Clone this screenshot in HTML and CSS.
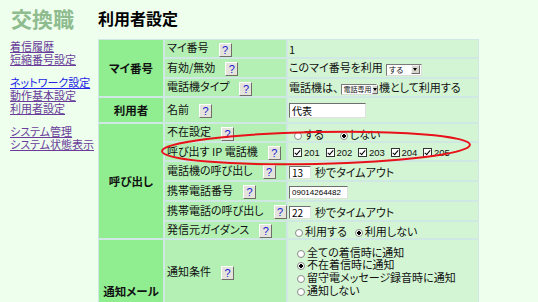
FILE: index.html
```html
<!DOCTYPE html>
<html lang="ja">
<head>
<meta charset="utf-8">
<title>利用者設定</title>
<link rel="stylesheet" href="styles.css">
</head>
<body>
<div class="page">
  <div class="logo">交換職</div>
  <h1 class="title">利用者設定</h1>
  <nav class="nav">
    <div class="nav-group">
      <a href="#" class="visited">着信履歴</a>
      <a href="#" class="visited">短縮番号設定</a>
    </div>
    <div class="nav-group">
      <a href="#" class="fresh">ネットワーク設定</a>
      <a href="#" class="visited">動作基本設定</a>
      <a href="#" class="visited">利用者設定</a>
    </div>
    <div class="nav-group">
      <a href="#" class="visited">システム管理</a>
      <a href="#" class="visited">システム状態表示</a>
    </div>
  </nav>
  <main class="content">
    <table class="settings">
      <colgroup>
        <col class="c-cat">
        <col class="c-label">
        <col class="c-value">
      </colgroup>
      <tbody>
        <tr class="h19">
          <td class="cat" rowspan="3">マイ番号</td>
          <td class="label">マイ番号<button class="help" type="button">?</button></td>
          <td class="value">1</td>
        </tr>
        <tr class="h20">
          <td class="label">有効/無効<button class="help" type="button">?</button></td>
          <td class="value">このマイ番号を利用<span class="select sel-use"><span class="sel-val">する</span><span class="sel-btn"></span></span></td>
        </tr>
        <tr class="h19">
          <td class="label">電話機タイプ<button class="help" type="button">?</button></td>
          <td class="value">電話機は、<span class="select sel-type"><span class="sel-val">電話専用</span><span class="sel-btn"></span></span> 機として利用する</td>
        </tr>
        <tr class="h26">
          <td class="cat">利用者</td>
          <td class="label">名前<button class="help" type="button">?</button></td>
          <td class="value"><input class="text w-name" type="text" value="代表"></td>
        </tr>
        <tr class="h19">
          <td class="cat" rowspan="6">呼び出し</td>
          <td class="label">不在設定<button class="help" type="button">?</button></td>
          <td class="value"><label class="opt opt-a"><input class="rb" type="radio" name="absent">する</label><label class="opt"><input class="rb" type="radio" name="absent" checked>しない</label></td>
        </tr>
        <tr class="h19">
          <td class="label">呼び出す IP 電話機<button class="help" type="button">?</button></td>
          <td class="value"><span class="cbs"><label class="cb-item"><input class="cb" type="checkbox" checked>201</label><label class="cb-item"><input class="cb" type="checkbox" checked>202</label><label class="cb-item"><input class="cb" type="checkbox" checked>203</label><label class="cb-item"><input class="cb" type="checkbox" checked>204</label><label class="cb-item"><input class="cb" type="checkbox" checked>205</label></span></td>
        </tr>
        <tr class="h20">
          <td class="label">電話機の呼び出し<button class="help" type="button">?</button></td>
          <td class="value"><input class="text w-sec" type="text" value="13"><span class="after">秒でタイムアウト</span></td>
        </tr>
        <tr class="h20">
          <td class="label">携帯電話番号<button class="help" type="button">?</button></td>
          <td class="value"><input class="text w-tel" type="text" value="09014264482"></td>
        </tr>
        <tr class="h20">
          <td class="label">携帯電話の呼び出し<button class="help" type="button">?</button></td>
          <td class="value"><input class="text w-sec" type="text" value="22"><span class="after">秒でタイムアウト</span></td>
        </tr>
        <tr class="h18">
          <td class="label">発信元ガイダンス<button class="help" type="button">?</button></td>
          <td class="value"><label class="opt opt-b"><input class="rb" type="radio" name="guide">利用する</label><label class="opt"><input class="rb" type="radio" name="guide" checked>利用しない</label></td>
        </tr>
        <tr class="h64">
          <td class="cat cat-mail" rowspan="3">通知メール</td>
          <td class="label label-top">通知条件<button class="help" type="button">?</button></td>
          <td class="value list">
            <label class="line"><input class="rb" type="radio" name="notify">全ての着信時に通知</label>
            <label class="line"><input class="rb" type="radio" name="notify" checked>不在着信時に通知</label>
            <label class="line"><input class="rb" type="radio" name="notify">留守電メッセージ録音時に通知</label>
            <label class="line"><input class="rb" type="radio" name="notify">通知しない</label>
          </td>
        </tr>
        <tr class="h20">
          <td class="label"></td>
          <td class="value"></td>
        </tr>
        <tr class="h20">
          <td class="label"></td>
          <td class="value"></td>
        </tr>
      </tbody>
    </table>
  </main>
</div>
<svg class="annot" width="538" height="302" viewBox="0 0 538 302" aria-hidden="true">
  <ellipse cx="316" cy="148" rx="154" ry="16" transform="rotate(-1.2 316 148)" fill="none" stroke="#e8121a" stroke-width="2"/>
</svg>
</body>
</html>
```

FILE: styles.css
```css
* { box-sizing: border-box; }

body {
  margin: 0;
  background: #eeffee;
  font-family: "Noto Sans CJK JP", "Noto Sans", sans-serif;
  font-size: 11px;
  color: #111;
  font-feature-settings: "palt" 1;
}

.page {
  display: grid;
  grid-template-columns: 98px auto;
  grid-template-rows: 39px auto;
}

.logo {
  padding: 6px 0 0 11px;
  font-size: 21px;
  line-height: 24px;
  font-weight: bold;
  color: #8fbc8f;
}

.title {
  margin: 0;
  padding-top: 10px;
  font-size: 16px;
  line-height: 16px;
  font-weight: bold;
  color: #000;
}

.nav {
  padding: 1px 0 0 10px;
}

.nav-group {
  margin-bottom: 10px;
}

.nav a {
  display: block;
  line-height: 13px;
  font-size: 11px;
}

.nav a.visited { color: #6a3d9a; }
.nav a.fresh { color: #2323e6; }

.settings {
  border-collapse: separate;
  border-spacing: 0;
  table-layout: fixed;
  width: 381px;
}

.c-cat { width: 66px; }
.c-label { width: 123px; }
.c-value { width: 192px; }

.settings td {
  border: 1px solid #cfe8e4;
  padding: 0 1px;
  white-space: nowrap;
  vertical-align: middle;
  line-height: 14px;
}

.h18 { height: 18px; }
.h19 { height: 19px; }
.h20 { height: 20px; }
.h26 { height: 26px; }
.h64 { height: 64px; }

.cat {
  background: #90ee90;
  font-weight: bold;
  text-align: center;
  font-size: 11.5px;
}

.settings td.cat-mail {
  vertical-align: top;
  padding-top: 44px;
}

.label {
  background: #b4f0b4;
}

.settings td.label { padding-left: 2px; }

.settings td.label-top {
  vertical-align: top;
  padding-top: 24px;
}

.value {
  background: #d4f5d4;
}

.help {
  display: inline-block;
  width: 13px;
  height: 14px;
  margin-left: 10px;
  padding: 0;
  font-family: "Liberation Sans", sans-serif;
  font-size: 11px;
  line-height: 12px;
  color: #1a1ad0;
  background: #e4e4dc;
  border: 1px solid;
  border-color: #ffffff #6f6f68 #6f6f68 #ffffff;
  vertical-align: middle;
}

.select {
  display: inline-flex;
  align-items: center;
  justify-content: space-between;
  vertical-align: middle;
  background: #fff;
  border: 1px solid;
  border-color: #7a7a7a #dcdcdc #dcdcdc #7a7a7a;
  padding: 0 1px 0 2px;
}

.sel-use {
  width: 36px;
  height: 12px;
  margin-left: 3px;
  font-size: 8px;
}

.sel-type {
  width: 36px;
  height: 11px;
  margin-left: 2px;
  font-size: 7px;
}

.sel-val {
  line-height: 9px;
}

.sel-btn {
  display: inline-flex;
  align-items: center;
  justify-content: center;
  width: 9px;
  height: 9px;
  background: #d8d6cc;
  border: 1px solid;
  border-color: #f4f4f4 #6a6a6a #6a6a6a #f4f4f4;
}

.sel-btn::after {
  content: "";
  border-left: 2.5px solid transparent;
  border-right: 2.5px solid transparent;
  border-top: 3px solid #000;
}

.text {
  font-family: "Noto Sans CJK JP", sans-serif;
  font-size: 10px;
  line-height: 11px;
  padding: 0 2px;
  margin: 0;
  background: #fff;
  color: #000;
  border: 1px solid;
  border-color: #6e6e6e #e0e0e0 #e0e0e0 #6e6e6e;
  vertical-align: middle;
}

.w-name { width: 77px; height: 15px; }
.w-sec { width: 22px; height: 13px; }
.w-tel { width: 59px; height: 13px; font-size: 8px; font-family: "Liberation Sans", sans-serif; }

.after {
  margin-left: 4px;
  vertical-align: middle;
}

.rb {
  appearance: none;
  -webkit-appearance: none;
  width: 8px;
  height: 8px;
  margin: 0 2px 0 0;
  border: 1px solid #8a8a8a;
  border-radius: 50%;
  background: #fff;
  vertical-align: middle;
}

.rb:checked {
  background: radial-gradient(circle, #000 0 1.6px, #fff 2.1px);
}

.opt {
  display: inline-block;
  vertical-align: middle;
}

.opt-a { margin-left: 5px; margin-right: 16px; }
.opt-b { margin-left: 6px; margin-right: 8px; }

.cbs {
  display: inline-block;
  margin-left: 4px;
  vertical-align: middle;
}

.cb-item {
  display: inline-block;
  width: 32.5px;
  font-family: "Liberation Sans", sans-serif;
  font-size: 9.5px;
}

.cb {
  appearance: none;
  -webkit-appearance: none;
  position: relative;
  width: 9px;
  height: 9px;
  margin: 0 2px 0 0;
  border: 1px solid #333;
  background: #fff;
  vertical-align: -1px;
}

.cb:checked::after {
  content: "";
  position: absolute;
  left: 2px;
  top: 0;
  width: 2px;
  height: 5px;
  border: solid #000;
  border-width: 0 1.5px 1.5px 0;
  transform: rotate(40deg);
}

.settings td.list {
  padding: 5px 1px 5px 9px;
}

.line {
  display: block;
  height: 12.7px;
  line-height: 12.7px;
}

.annot {
  position: absolute;
  left: 0;
  top: 0;
  pointer-events: none;
}
```
